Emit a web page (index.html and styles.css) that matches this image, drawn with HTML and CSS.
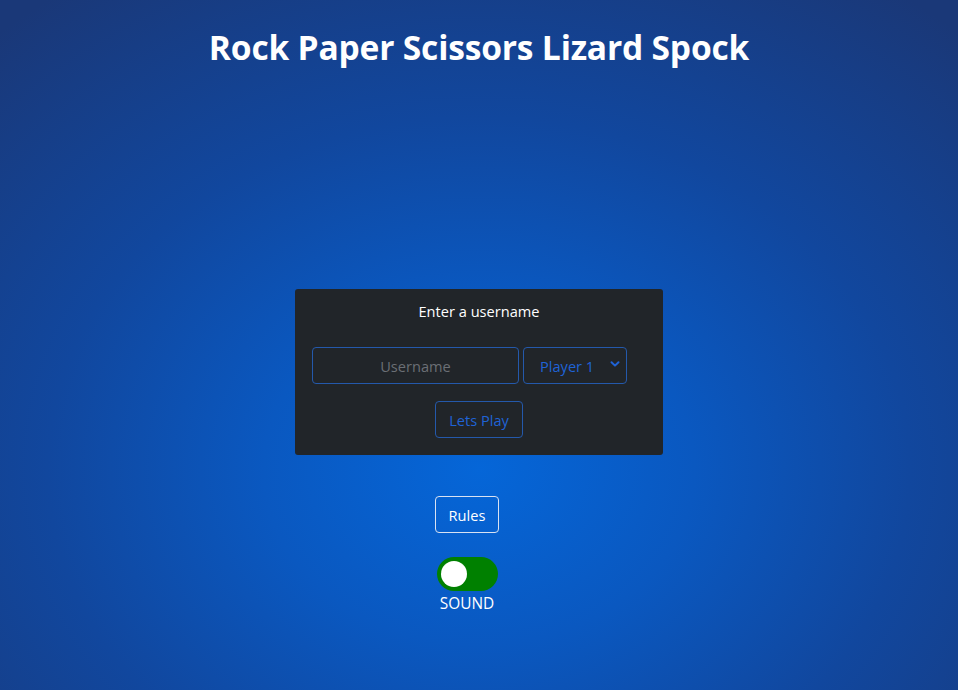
FILE: index.html
```html
<!DOCTYPE html>
<html lang="en">
<head>
<meta charset="utf-8">
<title>Rock Paper Scissors Lizard Spock</title>
<link rel="stylesheet" href="styles.css">
</head>
<body>
<main class="page">
  <h1 class="title">Rock Paper Scissors Lizard Spock</h1>
  <section class="card">
    <p class="card-label">Enter a username</p>
    <div class="row">
      <input class="field" type="text" placeholder="Username">
      <div class="select">
        <span class="select-text">Player 1</span>
        <svg class="chev" width="10" height="8" viewBox="0 0 10 8"><path d="M1.5 2.2 L5 5.6 L8.5 2.2" fill="none" stroke="#1f63d6" stroke-width="2" stroke-linecap="round" stroke-linejoin="round"/></svg>
      </div>
    </div>
    <button class="btn btn-blue">Lets Play</button>
  </section>
  <button class="btn btn-white">Rules</button>
  <div class="toggle-wrap">
    <div class="toggle"><span class="knob"></span></div>
    <span class="toggle-label">SOUND</span>
  </div>
</main>
</body>
</html>
```
FILE: styles.css
```css
html, body {
  margin: 0;
  height: 100%;
}
body {
  font-family: "Open Sans", "Noto Sans", sans-serif;
  color: #fff;
  background: radial-gradient(ellipse 75% 85% at 50% 68%, #0566d8 0%, #0a58c0 30%, #11479e 60%, #1a3878 100%);
  overflow: hidden;
}
.page {
  display: flex;
  flex-direction: column;
  align-items: center;
}
.title {
  margin: 26px 0 0;
  font-size: 33.6px;
  font-weight: 700;
  line-height: 42px;
  letter-spacing: -0.2px;
}
.card {
  margin-top: 221px;
  width: 368px;
  height: 166px;
  box-sizing: border-box;
  background: #212529;
  border-radius: 3px;
  display: flex;
  flex-direction: column;
  align-items: center;
  padding-top: 12px;
}
.card-label {
  margin: 0;
  font-size: 14.6px;
  line-height: 20px;
}
.row {
  display: flex;
  gap: 4px;
  margin-top: 26px;
  margin-left: -19px;
}
.field {
  width: 207px;
  height: 37px;
  box-sizing: border-box;
  background: transparent;
  border: 1px solid #2459ab;
  border-radius: 4px;
  text-align: center;
  font-family: inherit;
  font-size: 14.6px;
  color: #fff;
  outline: none;
}
.field::placeholder {
  color: #6b6f75;
}
.select {
  width: 104px;
  height: 37px;
  box-sizing: border-box;
  border: 1px solid #2459ab;
  border-radius: 4px;
  display: flex;
  align-items: center;
  padding-left: 16px;
  padding-right: 6px;
  color: #1f63d6;
  font-size: 14.6px;
}
.select-text {
  flex: 1;
}
.chev {
  margin-top: -4px;
}
.btn {
  font-family: inherit;
  font-size: 14.6px;
  height: 37px;
  box-sizing: border-box;
  background: transparent;
  border-radius: 4px;
  padding: 0 12px;
}
.btn-blue {
  margin-top: 17px;
  width: 88px;
  color: #1f63d6;
  border: 1px solid #2459ab;
}
.btn-white {
  margin-top: 41px;
  margin-right: 24px;
  width: 64px;
  color: #fff;
  border: 1px solid #d9e2f2;
}
.toggle-wrap {
  margin-top: 24px;
  margin-right: 24px;
  display: flex;
  flex-direction: column;
  align-items: center;
}
.toggle {
  width: 61px;
  height: 34px;
  border-radius: 17px;
  background: #008000;
  display: flex;
  align-items: center;
  padding-left: 4px;
  box-sizing: border-box;
}
.knob {
  width: 26px;
  height: 26px;
  border-radius: 50%;
  background: #fff;
}
.toggle-label {
  font-size: 15.4px;
  line-height: 20px;
  margin-top: 3px;
}
```
